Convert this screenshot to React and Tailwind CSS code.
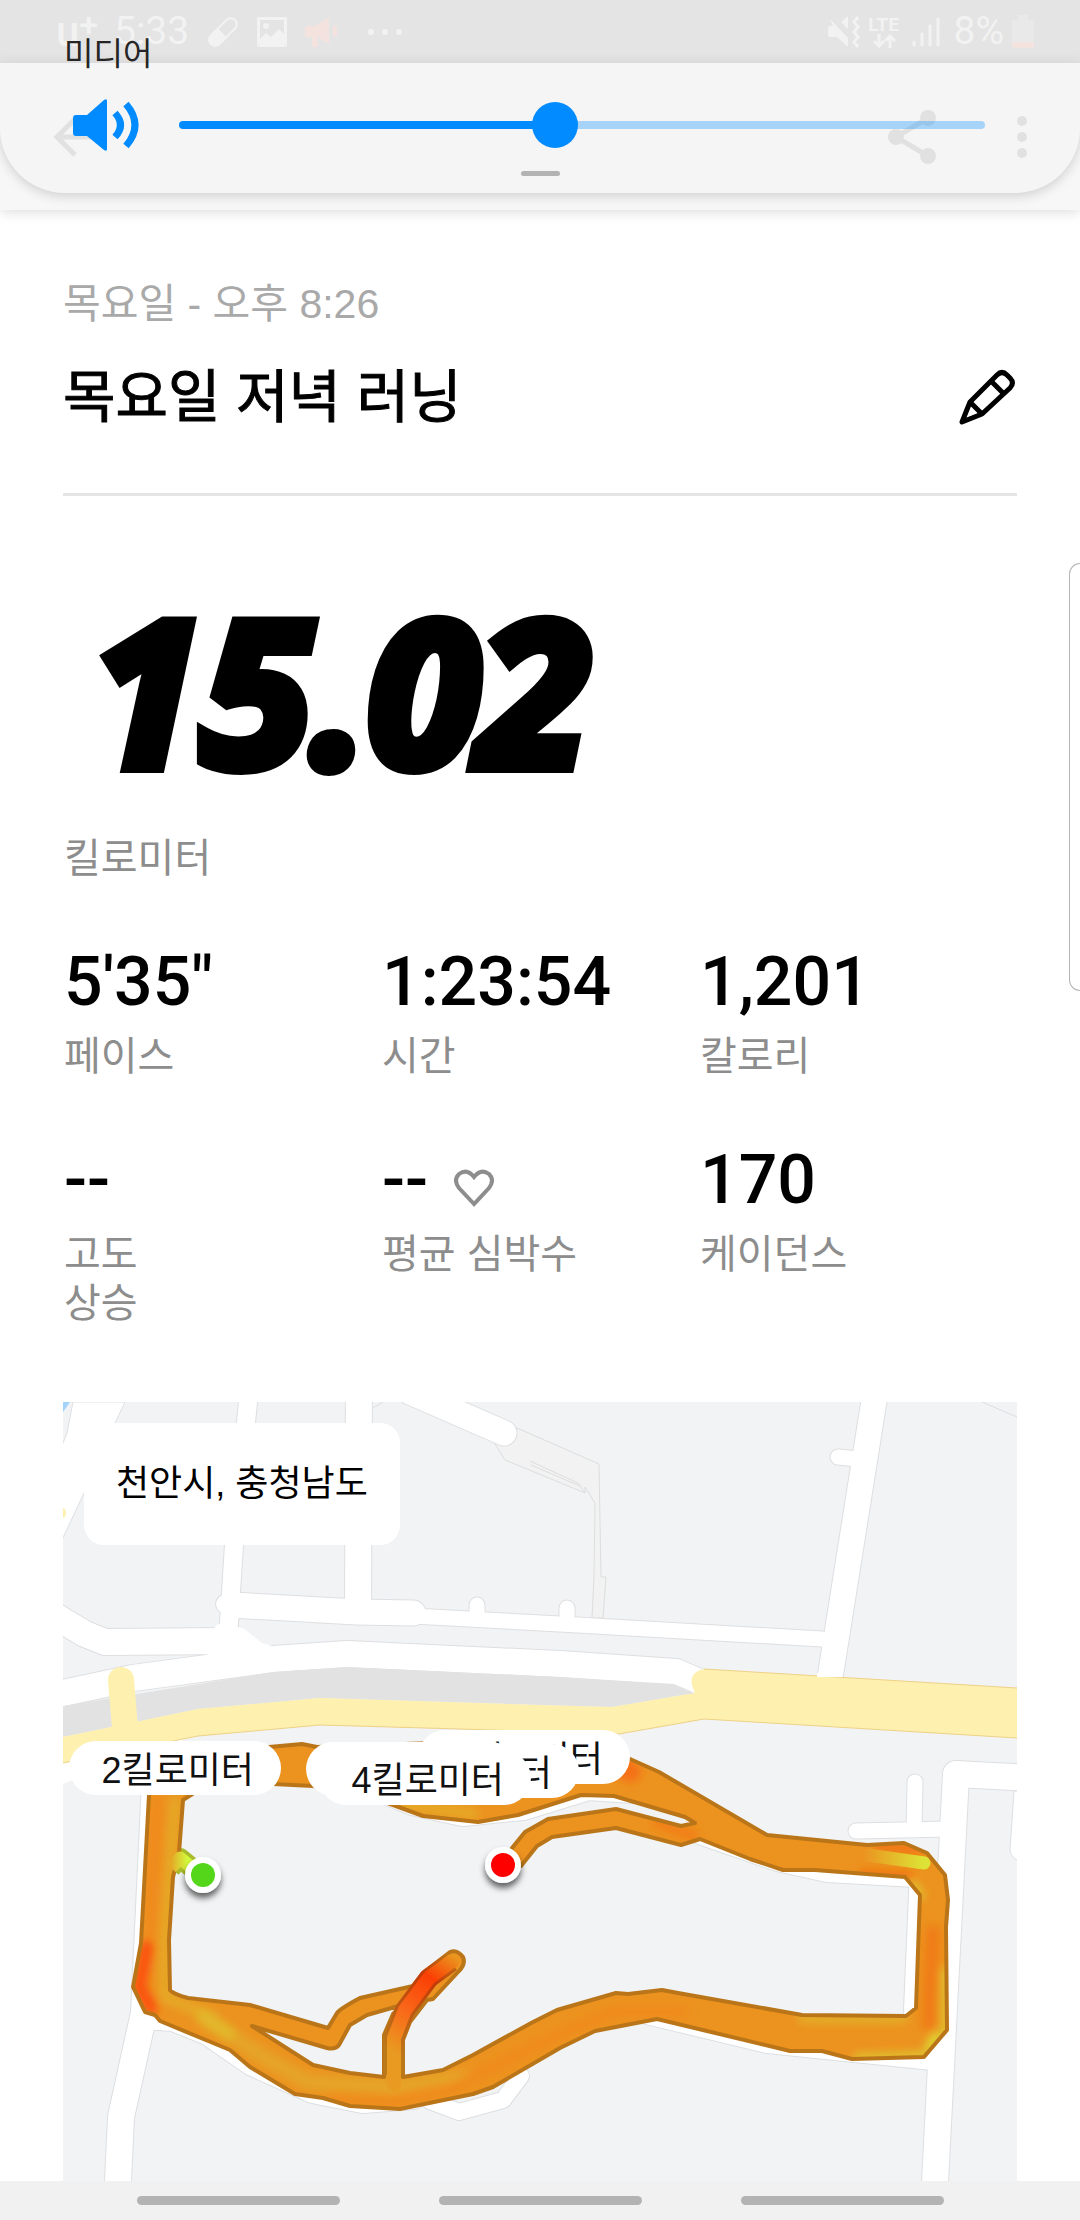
import { useState } from "react";

const stats = [
  { value: "5'35\"", label: "페이스" },
  { value: "1:23:54", label: "시간" },
  { value: "1,201", label: "칼로리" },
  { value: "--", label: "고도\n상승" },
  { value: "--", label: "평균 심박수", heart: true },
  { value: "170", label: "케이던스" },
];

// later items lie on top of earlier ones
const kmPins = [
  { text: "8킬로미터", place: "left-[355px] top-[328px]" },
  { text: "6킬로미터", place: "left-[304px] top-[342px]" },
  { text: "", place: "left-[243px] top-[340px]" },
  { text: "4킬로미터", place: "left-[256px] top-[349px]" },
  { text: "2킬로미터", place: "left-[6px] top-[339px]" },
];

const roads = [
  { d: "M185 0 L171 143 L168 190 L165 236", w: 18 },
  { d: "M162 202 L168 203", w: 18 },
  { d: "M296 -20 L295 205", w: 26 },
  { d: "M168 203 L294 210 L350 211", w: 25 },
  { d: "M350 214 L497 222 L759 237", w: 15 },
  { d: "M414 203 V216", w: 15 },
  { d: "M504 206 V220", w: 15 },
  { d: "M-20 206 L0 219 L22 232 L42 240 L165 239", w: 26 },
  { d: "M-20 295 L0 291 L70 276 L210 257 L284 252 L497 262 L613 270 L636 280", w: 26 },
  { d: "M814 -20 L766 282", w: 25 },
  { d: "M775 55 L805 58", w: 15 },
  { d: "M347 -10 L441 31", w: 25 },
  { d: "M970 376 L893 372 L871 800", w: 26 },
  { d: "M852 380 L851 428", w: 15 },
  { d: "M793 429 L885 427", w: 15 },
  { d: "M92 380 L81 611 L58 715 L54 800", w: 26 },
  { d: "M81 614 L110 616 L145 630 L190 661 L250 688 L300 698 L350 694", w: 26 },
  { d: "M367 699 L396 710 L440 698 L458 674", w: 16 },
  { d: "M580 608 L705 638 L870 655", w: 26 },
  { d: "M300 380 L350 400 L400 411 L460 405 L525 385 L600 390", w: 26 },
  { d: "M640 430 L715 456 L765 467 L870 473", w: 26 },
  { d: "M855 480 L849 620", w: 17 },
];

const routeOuter =
  "M70 585 L78 541 L86 393 L95 365 L120 352 L206 345 L239 342 L254 345 L400 340 L567 357 L596 370 L704 433 L804 443 L841 441 L864 451 L882 473 L885 498 L883 525 L884 628 L861 655 L789 657 L759 649 L727 649 L594 617 L532 629 L497 646 L430 685 L410 692 L337 707 L287 704 L260 696 L232 692 L187 665 L167 648 L97 619 L92 613 L82 610 Z";
const routeInner =
  "M120 398 L116 451 L110 475 L106 538 L107 588 Q110 592 125 596 L187 603 L265 626 L274 611 Q278 606 297 596 L350 584 L360 571 L387 550 Q394 547 400 555 Q403 562 396 569 L370 597 L364 598 L347 620 L340 638 L340 675 L380 668 L410 653 L470 620 L494 608 L553 591 L565 592 L599 588 L615 591 L739 613 L843 614 L853 606 L857 493 L842 475 L752 468 L720 468 L687 457 L637 437 L618 443 L553 426 L489 435 L474 444 L458 464 L440 460 L449 446 L462 430 L485 417 L553 407 L618 424 L632 421 L622 415 L551 394 L518 393 L477 406 L455 413 L415 420 L360 414 L330 403 L300 392 L250 384 L210 382 L145 382 Z";
const routeGap =
  "M189 624 L264 646 Q272 648 276 643 L287 623 L304 613 L339 603 L330 612 L321 633 L321 675 L287 671 L250 663 Z";
const route = `${routeOuter} ${routeInner} ${routeGap}`;

function StatusBar() {
  return (
    <div className="flex h-[63px] items-center justify-between bg-[#e1e1e1] px-[56px] font-[Roboto,sans-serif] text-[#f3f3f3]">
      <div className="flex items-center">
        <div className="flex w-[58px] items-start font-medium">
          <span className="text-[42px] leading-[42px]">u</span>
          <span className="text-[34px] leading-[26px]">+</span>
        </div>
        <span className="w-[93px] text-[39px] leading-none">5:33</span>
        <svg viewBox="0 0 32 32" className="h-8 w-8" aria-hidden="true">
          <g transform="rotate(45 16 16)">
            <rect x="10" y="-1" width="12" height="34" rx="6" fill="none" stroke="currentColor" strokeWidth="2" />
            <path d="M9 17 H23 V27 a7 7 0 0 1 -14 0 Z" fill="currentColor" />
          </g>
        </svg>
        <svg viewBox="0 0 30 30" className="ml-[18px] h-[30px] w-[30px]" aria-hidden="true">
          <path
            fillRule="evenodd"
            fill="currentColor"
            d="M2 0 H28 a2 2 0 0 1 2 2 V28 a2 2 0 0 1 -2 2 H2 a2 2 0 0 1 -2 -2 V2 a2 2 0 0 1 2 -2 Z M3 3 V22 L9 16 L14 20 L22 12 L27 17 V3 Z"
          />
          <circle cx="9" cy="9" r="3" fill="currentColor" />
        </svg>
        <svg viewBox="0 0 32 30" className="ml-[18px] h-[30px] w-8 text-[#f6dfdb]" aria-hidden="true">
          <path d="M2 9 H11 L24 0 V27 L13 20 V30 H7 V20 H2 Q0 20 0 17 V12 Q0 9 2 9 Z M28 8 a6 6 0 0 1 0 12 Z" fill="currentColor" />
        </svg>
        <svg viewBox="0 0 36 8" className="ml-[30px] h-2 w-9" aria-hidden="true">
          <circle cx="4" cy="4" r="3" fill="currentColor" />
          <circle cx="18" cy="4" r="3" fill="currentColor" />
          <circle cx="32" cy="4" r="3" fill="currentColor" />
        </svg>
      </div>
      <div className="-mr-[10px] flex items-center">
        <svg viewBox="0 0 32 32" className="h-8 w-8" aria-hidden="true">
          <path d="M0 12 Q0 10 2 10 H5 L2 3 L20 22 V31 L9 21 H2 Q0 21 0 19 Z M13 6 L20 0 V13 Z" fill="currentColor" />
          <path d="M30 1 L26 6 L30 11 L26 16 L30 21 L26 26 L30 31" fill="none" stroke="currentColor" strokeWidth="3" />
        </svg>
        <div className="ml-[8px] flex w-[32px] flex-col items-center">
          <span className="text-[19px] leading-[18px] font-bold">LTE</span>
          <svg viewBox="0 0 24 14" className="h-[14px] w-6" aria-hidden="true">
            <path d="M7 0 V11 M2 7 L7 12 L12 7 M18 14 V3 M13 7 L18 2 L23 7" fill="none" stroke="currentColor" strokeWidth="3" />
          </svg>
        </div>
        <svg viewBox="0 0 28 30" className="ml-3 h-[30px] w-7" aria-hidden="true">
          <path d="M2 25 V28 M10 17 V28 M18 9 V28 M26 2 V28" stroke="currentColor" strokeWidth="3" strokeLinecap="round" />
        </svg>
        <span className="ml-[14px] text-[39px] leading-none">8%</span>
        <svg viewBox="0 0 22 34" className="ml-2 h-[34px] w-[22px]" aria-hidden="true">
          <path d="M6 0 H16 V5 H22 V28 H0 V5 H6 Z" fill="#e8e8e8" />
          <path d="M0 27 H22 V31 Q22 33 20 33 H2 Q0 33 0 31 Z" fill="#f6dfdb" />
        </svg>
      </div>
    </div>
  );
}

function AppBar() {
  return (
    <div className="flex h-[147px] items-center bg-[#f7f7f7] px-[52px] text-[#dedede] shadow-[0_2px_12px_rgba(0,0,0,0.14)]">
      <button aria-label="뒤로">
        <svg viewBox="0 0 48 40" className="h-10 w-12">
          <path d="M23 2 L5 20 L23 38 M5 20 H48" fill="none" stroke="currentColor" strokeWidth="5" />
        </svg>
      </button>
      <button aria-label="공유" className="ml-auto">
        <svg viewBox="0 0 48 54" className="h-[54px] w-12">
          <path d="M40 8 L8 27 L40 46" fill="none" stroke="currentColor" strokeWidth="5" />
          <circle cx="40" cy="8" r="8" fill="currentColor" />
          <circle cx="8" cy="27" r="8" fill="currentColor" />
          <circle cx="40" cy="46" r="8" fill="currentColor" />
        </svg>
      </button>
      <button aria-label="더보기" className="ml-[80px]">
        <svg viewBox="0 0 12 44" className="h-11 w-3">
          <circle cx="6" cy="6" r="5" fill="currentColor" />
          <circle cx="6" cy="22" r="5" fill="currentColor" />
          <circle cx="6" cy="38" r="5" fill="currentColor" />
        </svg>
      </button>
    </div>
  );
}

function VolumePanel() {
  const [volume, setVolume] = useState(465);
  // the thumb is 46px wide, so its centre runs between 23px from each end
  const stop = `calc(23px + (100% - 46px) * ${volume / 1000})`;

  return (
    <div className="absolute inset-x-0 top-0 flex h-[193px] flex-col rounded-b-[65px] bg-[#f0f0f0]/20 shadow-[0_3px_12px_rgba(0,0,0,0.16)]">
      <label htmlFor="volume" className="mt-[34px] ml-[64px] text-[32px] leading-[40px] text-[#252525]">
        미디어
      </label>
      <div className="mt-[25px] flex h-[52px] items-center pr-[95px] pl-[73px]">
        <svg viewBox="0 0 66 52" className="h-[52px] w-[66px] shrink-0 text-[#018bff]" aria-hidden="true">
          <path d="M3 16 H14 L31 1 Q34 -1 34 2 V50 Q34 53 31 51 L14 37 H3 Q0 37 0 34 V19 Q0 16 3 16 Z" fill="currentColor" />
          <path d="M42 14 Q53 26 42 38 M53 5 Q71 26 53 47" fill="none" stroke="currentColor" strokeWidth="7" />
        </svg>
        <input
          id="volume"
          type="range"
          min="0"
          max="1000"
          value={volume}
          onChange={(e) => setVolume(Number(e.target.value))}
          className="ml-[40px] h-2 min-w-0 flex-1 appearance-none rounded-full outline-none [&::-webkit-slider-thumb]:h-[46px] [&::-webkit-slider-thumb]:w-[46px] [&::-webkit-slider-thumb]:appearance-none [&::-webkit-slider-thumb]:rounded-full [&::-webkit-slider-thumb]:bg-[#018bff]"
          style={{ background: `linear-gradient(to right, #018bff ${stop}, rgba(1,139,255,0.32) ${stop})` }}
        />
      </div>
      <div className="mx-auto mt-[20px] h-[5px] w-[39px] rounded-full bg-[#b3b3b3]" />
    </div>
  );
}

function RouteMap() {
  return (
    <div className="relative mt-[74px] overflow-hidden bg-[#f1f3f4]">
      <svg viewBox="0 0 954 779" className="block w-full" aria-hidden="true">
        <defs>
          <clipPath id="route-clip">
            <path d={route} clipRule="evenodd" />
          </clipPath>
          <filter id="soft" filterUnits="userSpaceOnUse" x="0" y="300" width="954" height="479">
            <feGaussianBlur stdDeviation="4" />
          </filter>
          <filter id="marker-shadow" filterUnits="userSpaceOnUse" x="100" y="430" width="380" height="90">
            <feDropShadow dx="0" dy="5" stdDeviation="3" floodColor="#000" floodOpacity="0.6" />
          </filter>
          <linearGradient id="spur" gradientUnits="userSpaceOnUse" x1="331" y1="650" x2="395" y2="555">
            <stop offset="0" stopColor="#e99a20" />
            <stop offset="0.35" stopColor="#f9691a" />
            <stop offset="0.72" stopColor="#fb3f04" />
            <stop offset="1" stopColor="#e99a20" />
          </linearGradient>
          <linearGradient id="spur-edge" gradientUnits="userSpaceOnUse" x1="331" y1="650" x2="395" y2="555">
            <stop offset="0" stopColor="#bb791a" />
            <stop offset="0.7" stopColor="#c23a08" />
            <stop offset="1" stopColor="#bb791a" />
          </linearGradient>
          <linearGradient id="first-metres" gradientUnits="userSpaceOnUse" x1="108" y1="0" x2="124" y2="0">
            <stop offset="0" stopColor="#e6a726" />
            <stop offset="1" stopColor="#d3f73c" />
          </linearGradient>
          <linearGradient id="fast-corner" gradientUnits="userSpaceOnUse" x1="800" y1="0" x2="860" y2="0">
            <stop offset="0" stopColor="#ec921f" />
            <stop offset="1" stopColor="#dde236" />
          </linearGradient>
        </defs>

        <path d="M0 0 H7 L0 10 Z" fill="#a3d3fb" />
        <path d="M10 0 L4 31 L-2 46 V140 L21 91 L52 21 L62 0 Z" fill="#fff" stroke="#dddfe2" />
        <ellipse cx="0" cy="111" rx="3" ry="5" fill="#fef0ae" />
        <path
          d="M454 26 L536 62 L538 175 L543 175 L540 216 L529 216 L531 175 L532 101 L522 85 L522 91 L442 58 L432 42 Z"
          fill="#f2f2f2"
          stroke="#dcdddd"
        />
        <path d="M467 59 L515 81 L522 91 M468 63 L517 84" fill="none" stroke="#dcdddd" />
        <path d="M919 0 L954 15 M310 6 L320 0" fill="none" stroke="#dddfe2" />
        <path d="M956 389 H951 L947 448 Q948 456 956 459 Z" fill="#fff" stroke="#dddfe2" />

        <g fill="none" strokeLinecap="round" strokeLinejoin="round">
          {roads.map((road) => (
            <path key={road.d} d={road.d} stroke="#dddfe2" strokeWidth={road.w + 2} />
          ))}
          {roads.map((road) => (
            <path key={road.d} d={road.d} stroke="#fff" strokeWidth={road.w} />
          ))}
        </g>
        <path d="M155 222 L180 226 L199 241 L209 244 L160 257 L130 248 Z" fill="#fff" />
        <path d="M0 361 V382 L10 378 L120 350 V335 Z" fill="#fff" />

        <path
          d="M0 304 L210 270 L284 265 L497 275 L611 282 L632 291 L549 305 L477 303 L257 296 L135 307 L0 335 Z"
          fill="#e2e2e2"
        />
        <path d="M58 278 L62 326" stroke="#fef0ae" strokeWidth="26" strokeLinecap="round" />
        <path
          d="M0 335 L135 307 L257 296 L477 303 L549 305 L632 291 Q622 271 641 267 L954 286 V336 L641 317 L556 332 L397 327 L257 323 L135 334 L0 361 Z"
          fill="#fef0ae"
        />
        <path
          d="M641 267 L954 286 M0 361 L135 334 L257 323 L397 327 L556 332 L641 317 L954 336"
          fill="none"
          stroke="#efd187"
        />
        <path d="M754 273 H779" stroke="#fff" strokeWidth="4" />

        {/* first metres, from the start marker to the loop */}
        <path d="M108 466 L117 456 L140 475" fill="none" stroke="#a9bd2c" strokeWidth="20" strokeLinejoin="round" />
        <path d={route} fill="#ec921f" fillRule="evenodd" />
        <g clipPath="url(#route-clip)">
          <g fill="none" filter="url(#soft)" strokeLinejoin="round" strokeLinecap="round">
            <path d="M112 400 L102 540 L102 595 L150 615" stroke="#e6a826" strokeWidth="12" />
            <path d="M95 400 L88 530" stroke="#f08a1c" strokeWidth="12" />
            <path d="M145 618 L200 655 L245 680 L330 685 L400 676" stroke="#e5a426" strokeWidth="16" />
            <path d="M140 615 L165 631" stroke="#e2b82b" strokeWidth="14" />
            <path d="M84 545 L76 585 L88 606" stroke="#fb530c" strokeWidth="14" />
            <path d="M270 695 L330 698 L390 686 L480 640 L550 610 L620 610" stroke="#f08a1c" strokeWidth="10" />
            <path d="M300 395 L360 405 L410 412" stroke="#e6a826" strokeWidth="12" />
            <path d="M550 362 L568 370" stroke="#f66f12" strokeWidth="20" />
            <path d="M595 420 L630 434" stroke="#f27f18" strokeWidth="12" />
            <path d="M815 445 L856 447 M800 472 L846 474" stroke="#f2700f" strokeWidth="8" />
            <path d="M850 482 L858 494" stroke="#dfc32e" strokeWidth="8" />
            <path d="M870 530 L867 590 L866 622" stroke="#f07c15" strokeWidth="14" />
            <path d="M883 570 V628 L860 654 L795 656" stroke="#dfc02e" strokeWidth="10" />
            <path d="M872 634 L866 642" stroke="#dde236" strokeWidth="6" />
            <path d="M740 616 H840" stroke="#e4ac28" strokeWidth="12" />
          </g>
          <path d="M805 453 L861 461" stroke="url(#fast-corner)" strokeWidth="13" strokeLinecap="round" />
        </g>
        <path d={route} fill="none" stroke="#ba7519" strokeWidth="4" strokeLinejoin="round" />
        <path d="M331 673 V636 L342 608 L366 576 L388 560" fill="none" stroke="url(#spur-edge)" strokeWidth="20" strokeLinejoin="round" />
        <path d="M331 682 V636 L342 608 L366 576 L389 559" fill="none" stroke="url(#spur)" strokeWidth="14" strokeLinejoin="round" strokeLinecap="round" />
        <path d="M108 466 L117 456 L140 475" fill="none" stroke="url(#first-metres)" strokeWidth="13" strokeLinejoin="round" />

        <g filter="url(#marker-shadow)">
          <circle cx="140" cy="473" r="18" fill="#fff" />
          <circle cx="440" cy="463" r="18" fill="#fff" />
        </g>
        <circle cx="140" cy="473" r="12" fill="#54d61a" />
        <circle cx="440" cy="463" r="12" fill="#fe0000" />
      </svg>

      <div className="absolute top-[21px] left-[21px] rounded-[20px] bg-white px-[32px] py-[36px] text-[36px] leading-[50px] text-black">
        천안시, 충청남도
      </div>
      {kmPins.map((pin) => (
        <div
          key={pin.place}
          className={`absolute flex h-[54px] w-[212px] items-center justify-end rounded-full bg-white pt-[5px] pr-[27px] text-[36px] leading-[48px] whitespace-nowrap text-[#111] ${pin.place}`}
        >
          {pin.text}
        </div>
      ))}
    </div>
  );
}

export default function App() {
  return (
    <div className="relative min-h-screen overflow-hidden bg-white font-['Liberation_Sans','Noto_Sans_CJK_KR',sans-serif]">
      <StatusBar />
      <AppBar />
      <VolumePanel />

      <main className="px-[63px] pt-[66px]">
        <p className="text-[41px] leading-[56px] text-[#a9a9a9]">목요일 - 오후 8:26</p>
        <div className="mt-[29px] flex h-[135px] items-start justify-between border-b-[3px] border-[#e5e5e5]">
          <h1 className="text-[57px] leading-[72px] font-normal text-black [-webkit-text-stroke:1px_#000]">목요일 저녁 러닝</h1>
          <button aria-label="이름 수정" className="mt-2 mr-[2px]">
            <svg viewBox="0 0 56 56" className="h-14 w-14">
              <g fill="none" stroke="#000" strokeWidth="5" strokeLinejoin="round">
                <path d="M3 53 L11 33 L38 6 Q43 1 48 6 L51 9 Q56 14 51 19 L23 45 Z" />
                <path d="M32 12 L45 25 M11 33 L23 45" />
              </g>
            </svg>
          </button>
        </div>

        <p className="mt-[113px] pl-[28px] font-['Open_Sans',sans-serif] text-[200px] leading-[160px] font-bold text-black italic [-webkit-text-stroke:14px_#000]">
          15.02
        </p>
        <p className="mt-[65px] pl-px text-[40px] leading-[48px] text-[#8d8d8d]">킬로미터</p>

        <dl className="mt-[64px] grid grid-cols-3 gap-y-[63px]">
          {stats.map((stat) => (
            <div key={stat.label} className="flex flex-col-reverse justify-end gap-[14px] pl-px">
              <dt className="text-[40px] leading-[49px] whitespace-pre-line text-[#8d8d8d]">{stat.label}</dt>
              <dd className="flex items-center font-[Roboto,sans-serif] text-[68px] leading-[72px] font-medium text-black">
                {stat.value}
                {stat.heart && (
                  <svg viewBox="0 0 40 38" className="mt-4 ml-[26px] h-[38px] w-10" aria-hidden="true">
                    <path
                      d="M20 35 L5 19 Q-1 11 5 5 Q13 -1 20 8 Q27 -1 35 5 Q41 11 35 19 Z"
                      fill="none"
                      stroke="#8d8d8d"
                      strokeWidth="4"
                    />
                  </svg>
                )}
              </dd>
            </div>
          ))}
        </dl>

        <RouteMap />
      </main>

      <aside className="absolute top-[563px] right-0 h-[428px] w-[11px] rounded-l-[14px] border border-r-0 border-[#b5b5b5] bg-white" />

      <nav className="flex h-[39px] items-center justify-center gap-[99px] bg-[#f1f1f1]">
        <button aria-label="최근 앱" className="h-[9px] w-[203px] rounded-full bg-[#b3b3b3]" />
        <button aria-label="홈" className="h-[9px] w-[203px] rounded-full bg-[#b3b3b3]" />
        <button aria-label="이전" className="h-[9px] w-[203px] rounded-full bg-[#b3b3b3]" />
      </nav>
    </div>
  );
}
